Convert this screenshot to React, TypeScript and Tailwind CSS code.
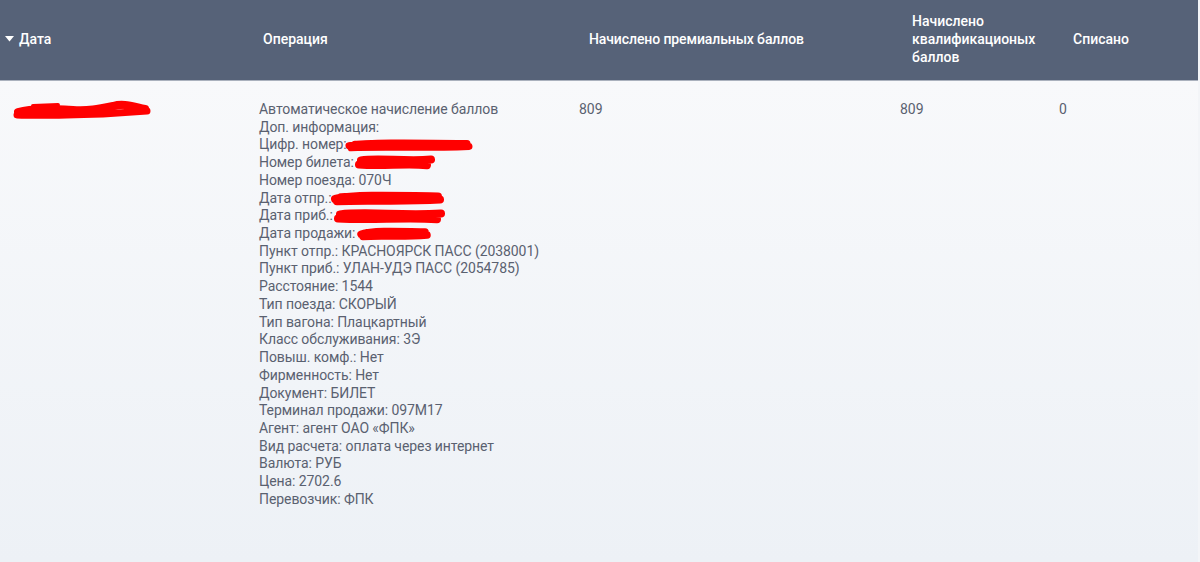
import React from "react";

function Scribble({ w, h, variant = 0 }: { w: number; h: number; variant?: number }) {
  const paths = [
    `M4 ${h * 0.55} C ${w * 0.2} ${h * 0.3}, ${w * 0.5} ${h * 0.35}, ${w - 6} ${h * 0.4} M6 ${h * 0.7} C ${w * 0.3} ${h * 0.6}, ${w * 0.6} ${h * 0.75}, ${w - 4} ${h * 0.6} M10 ${h * 0.45} L ${w - 12} ${h * 0.55}`,
    `M6 ${h * 0.4} C ${w * 0.3} ${h * 0.2}, ${w * 0.6} ${h * 0.5}, ${w - 4} ${h * 0.35} M4 ${h * 0.65} C ${w * 0.35} ${h * 0.8}, ${w * 0.6} ${h * 0.55}, ${w - 8} ${h * 0.7}`,
  ];
  return (
    <svg width={w} height={h} viewBox={`0 0 ${w} ${h}`} className="inline-block align-middle">
      <path d={paths[variant % 2]} stroke="#ff0000" strokeWidth={Math.max(6, h * 0.5)} strokeLinecap="round" fill="none" />
    </svg>
  );
}

function DateScribble() {
  return (
    <svg width="140" height="20" viewBox="0 0 140 20" className="block">
      <path d="M5 12 C 20 8, 40 9, 60 10 C 75 11, 85 9, 100 6 C 110 3, 118 6, 132 9" stroke="#ff0000" strokeWidth="8" strokeLinecap="round" fill="none" />
      <path d="M4 15 C 30 16, 60 15, 90 14 C 105 13, 120 12, 134 11" stroke="#ff0000" strokeWidth="7" strokeLinecap="round" fill="none" />
      <path d="M20 6 L 45 5 M 95 9 L 120 5" stroke="#ff0000" strokeWidth="4" strokeLinecap="round" fill="none" />
    </svg>
  );
}

const lines: { label: string; redact?: { w: number; h: number; ml: number; v: number } }[] = [
  { label: "Автоматическое начисление баллов" },
  { label: "Доп. информация:" },
  { label: "Цифр. номер:", redact: { w: 128, h: 14, ml: -2, v: 0 } },
  { label: "Номер билета:", redact: { w: 80, h: 16, ml: 1, v: 1 } },
  { label: "Номер поезда: 070Ч" },
  { label: "Дата отпр.:", redact: { w: 113, h: 16, ml: 0, v: 0 } },
  { label: "Дата приб.:", redact: { w: 111, h: 16, ml: 1, v: 1 } },
  { label: "Дата продажи:", redact: { w: 74, h: 15, ml: 2, v: 0 } },
  { label: "Пункт отпр.: КРАСНОЯРСК ПАСС (2038001)" },
  { label: "Пункт приб.: УЛАН-УДЭ ПАСС (2054785)" },
  { label: "Расстояние: 1544" },
  { label: "Тип поезда: СКОРЫЙ" },
  { label: "Тип вагона: Плацкартный" },
  { label: "Класс обслуживания: 3Э" },
  { label: "Повыш. комф.: Нет" },
  { label: "Фирменность: Нет" },
  { label: "Документ: БИЛЕТ" },
  { label: "Терминал продажи: 097М17" },
  { label: "Агент: агент ОАО «ФПК»" },
  { label: "Вид расчета: оплата через интернет" },
  { label: "Валюта: РУБ" },
  { label: "Цена: 2702.6" },
  { label: "Перевозчик: ФПК" },
];

export default function App() {
  return (
    <div
      className="w-[1200px] h-[562px] overflow-hidden bg-[#f3f5f8] text-[14px]"
      style={{ fontFamily: "Roboto, 'Noto Sans', sans-serif" }}
    >
      <div className="w-[1198px] h-full flex flex-col">
        <div className="h-[81px] pb-[2px] bg-[#566278] border-b border-[#aab1bd] flex items-center text-white font-medium leading-[18px] shrink-0">
          <div className="w-[263px] pl-[5px] flex items-center">
            <svg width="9" height="6" viewBox="0 0 9 6" className="mr-[5px]">
              <path d="M0 0 L9 0 L4.5 5.5 Z" fill="#ffffff" />
            </svg>
            <span>Дата</span>
          </div>
          <div className="w-[326px]">Операция</div>
          <div className="w-[323px] tracking-[-0.1px]">Начислено премиальных баллов</div>
          <div className="w-[161px] pr-[30px]">Начислено квалификационых баллов</div>
          <div className="flex-1">Списано</div>
        </div>
        <div className="flex-1 bg-gradient-to-b from-[#f8f9fb] to-[#edf1f6] flex text-[#5a6170] leading-[17.72px] pt-[20px]">
          <div className="w-[259px] pl-[13px] -mt-[1px]">
            <DateScribble />
          </div>
          <div className="w-[320px]">
            {lines.map((l, i) => (
              <div key={i} className="whitespace-nowrap h-[17.72px] tracking-[-0.08px]">
                {l.label}
                {l.redact && (
                  <span style={{ marginLeft: l.redact.ml }} className="inline-block align-middle -mt-[3px]">
                    <Scribble w={l.redact.w} h={l.redact.h} variant={l.redact.v} />
                  </span>
                )}
              </div>
            ))}
          </div>
          <div className="w-[321px]">809</div>
          <div className="w-[159px]">809</div>
          <div className="flex-1">0</div>
        </div>
      </div>
    </div>
  );
}
